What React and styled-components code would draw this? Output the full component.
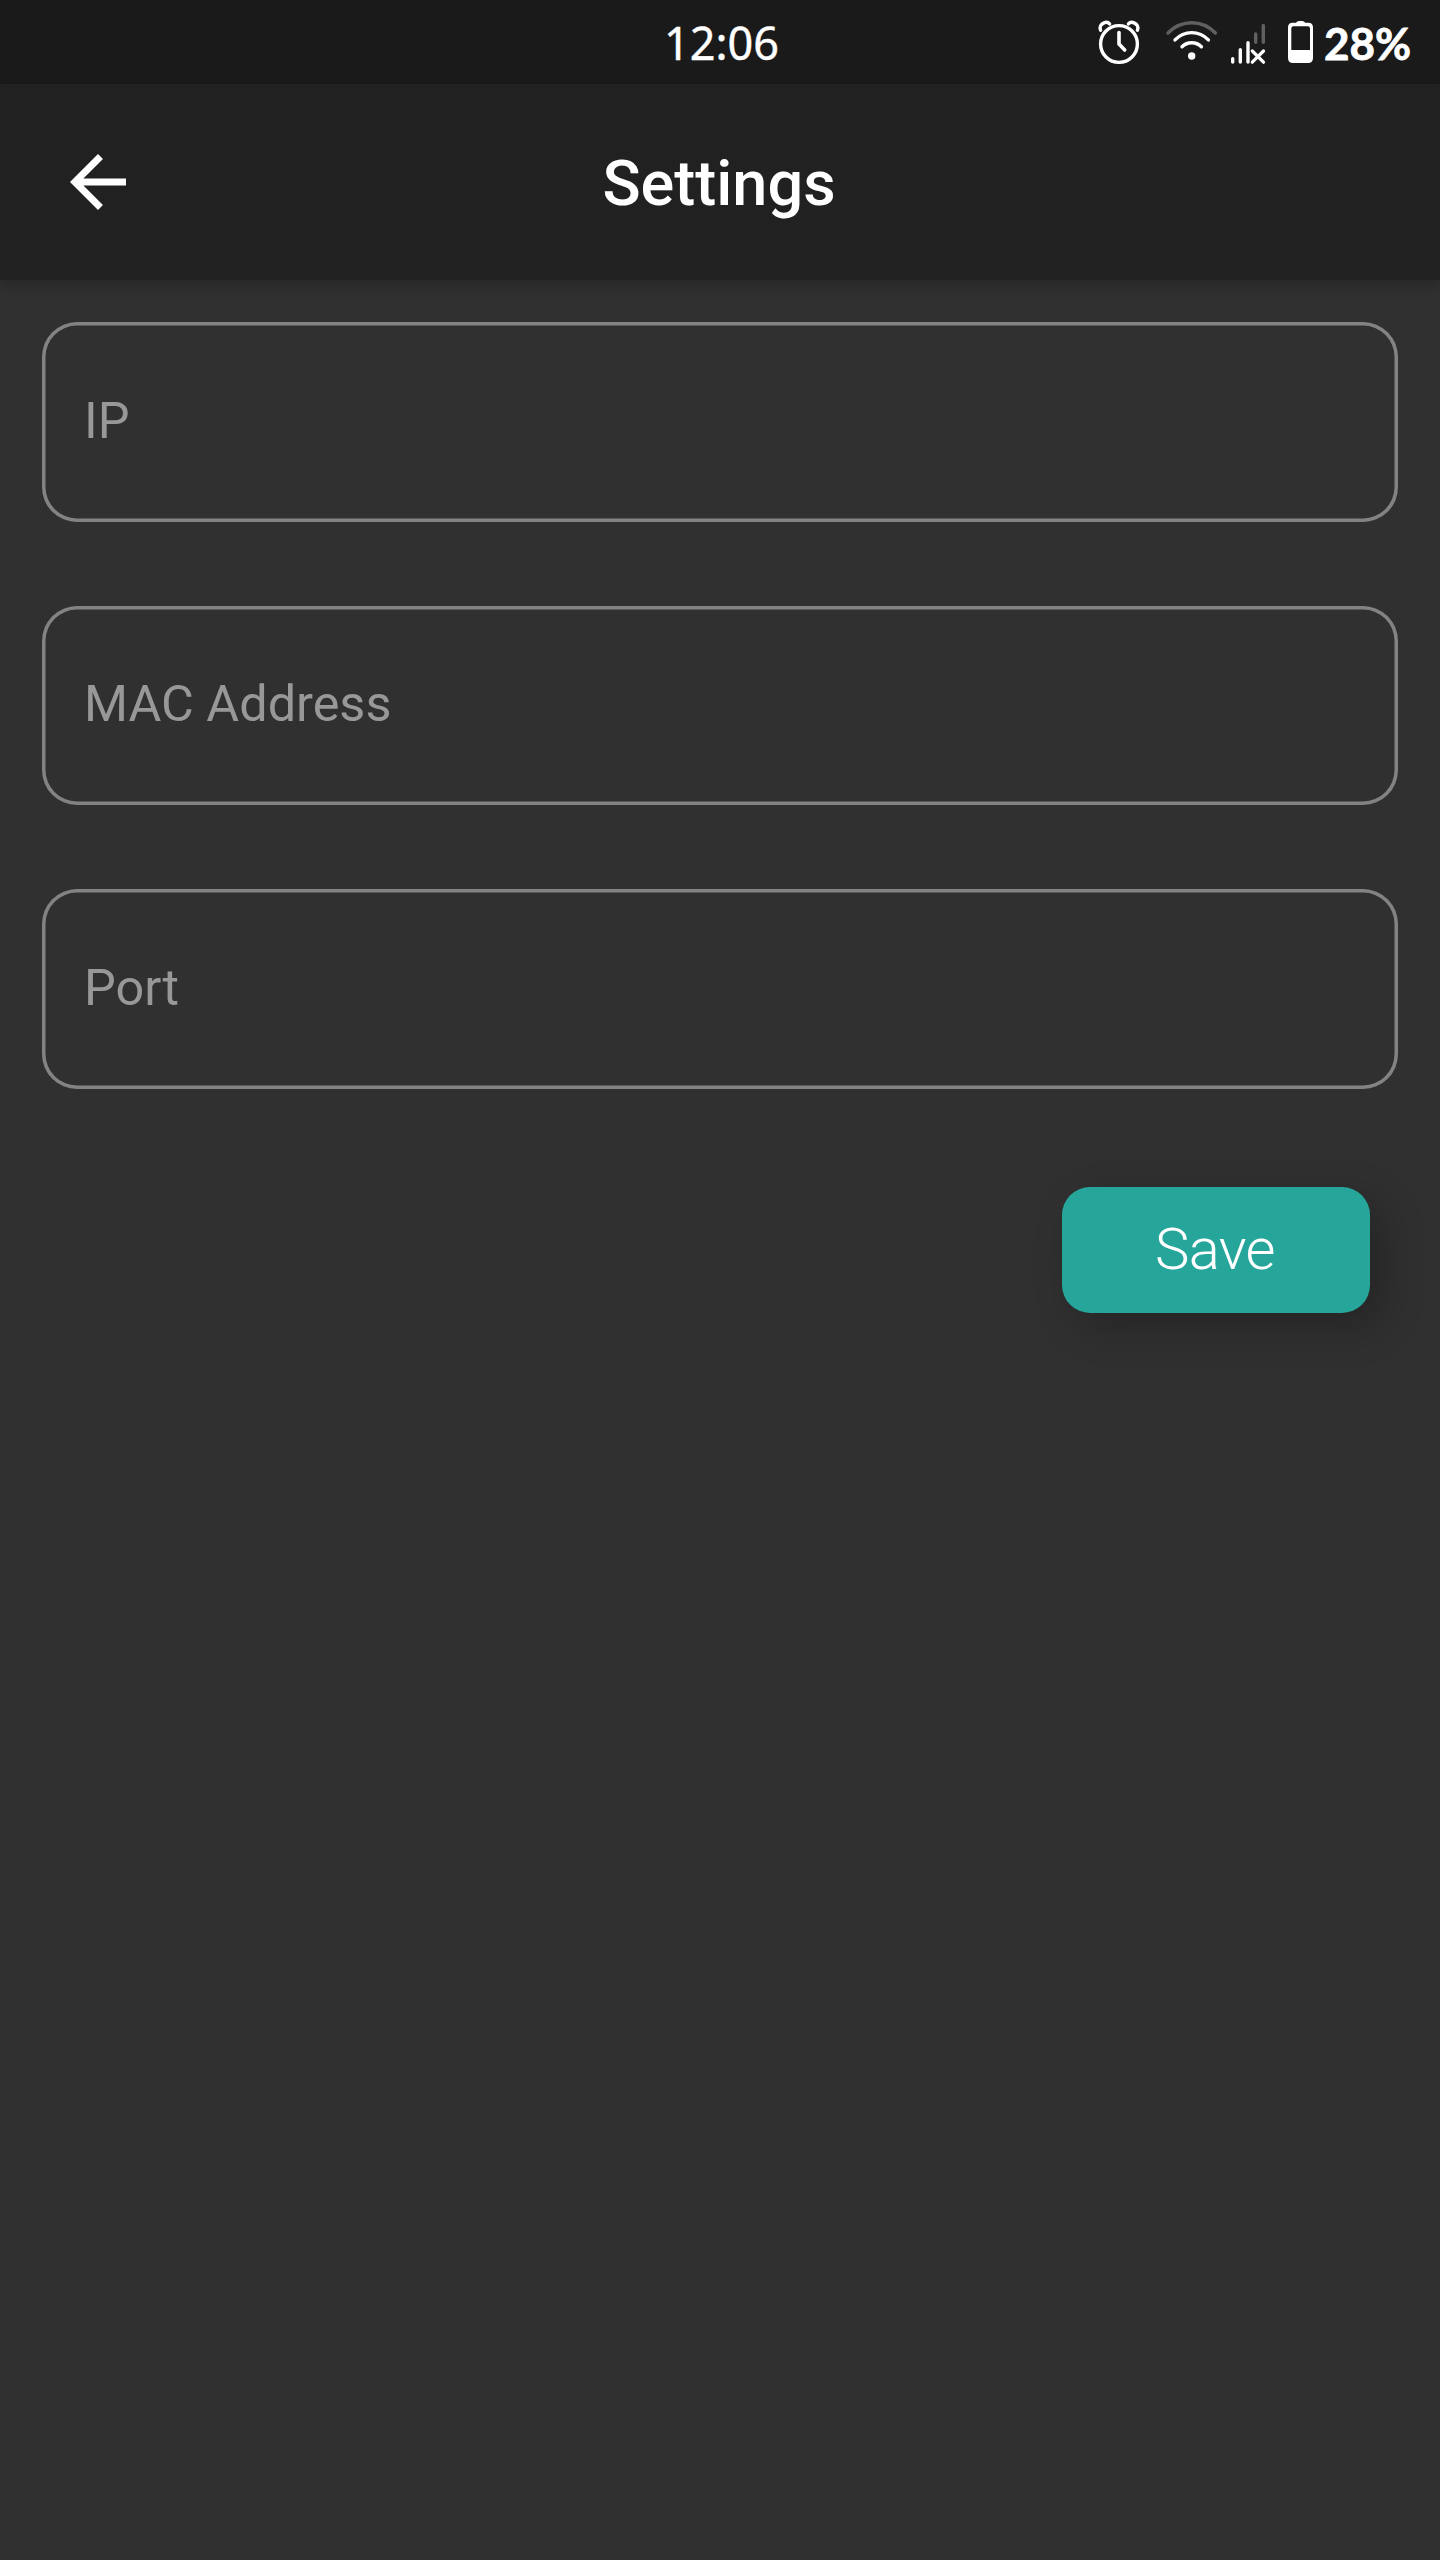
import React from "react";
import styled, { createGlobalStyle } from "styled-components";

const GlobalStyle = createGlobalStyle`
  *, *::before, *::after { box-sizing: border-box; }
  body { margin: 0; background: #303030; }
`;

const Screen = styled.div`
  display: flex;
  flex-direction: column;
  width: 1440px;
  min-height: 2560px;
  background: #303030;
  font-family: Roboto, "Noto Sans", sans-serif;
  color: #fff;
`;

const StatusBar = styled.div`
  display: grid;
  grid-template-columns: 1fr auto 1fr;
  align-items: center;
  height: 84px;
  background: #1a1a1a;
`;

const Clock = styled.time`
  grid-column: 2;
  padding: 1px 0 0 3px;
  font: 400 45px/60px "Noto Sans", sans-serif;
  -webkit-text-stroke: 0.4px #fff;
`;

const StatusIcons = styled.div`
  display: flex;
  align-items: flex-start;
  justify-content: flex-end;
  height: 84px;
  padding-right: 30px;
`;

const Glyph = styled.svg`
  flex: none;
  width: ${(p) => p.$width}px;
  height: 84px;
  margin-right: ${(p) => p.$gap}px;
  fill: none;
  stroke: #fff;
  stroke-linecap: round;
  stroke-linejoin: round;
`;

const BatteryLevel = styled.span`
  width: 86px;
  padding-top: 13px;
  font: 700 44px/60px Lato, sans-serif;
  -webkit-text-stroke: 0.8px #fff;
  white-space: nowrap;
`;

const AppBar = styled.header`
  display: grid;
  grid-template-columns: 196px 1fr 196px;
  align-items: center;
  height: 196px;
  background: #212121;
  box-shadow: 0 4px 14px rgba(0, 0, 0, 0.22);
`;

const BackButton = styled.button`
  display: flex;
  align-items: center;
  width: 196px;
  height: 196px;
  padding: 0 56px;
  border: 0;
  background: none;
  color: inherit;

  svg {
    flex: none;
    width: 84px;
    height: 84px;
    fill: currentColor;
  }
`;

const Title = styled.h1`
  margin: 0;
  padding: 4px 2px 0 0;
  text-align: center;
  font-size: 63px;
  line-height: 74px;
  font-weight: 500;
`;

const Form = styled.form`
  display: flex;
  flex-direction: column;
  gap: 84px;
  padding: 42px;
`;

const Field = styled.label`
  display: flex;
  align-items: center;
  height: 199.5px;
  padding: 0 42px 2px;
  border-radius: 35px;
  box-shadow: inset 0 0 0 3.5px #838383;
  color: #989898;
  font-size: 50.4px;
  line-height: 60px;
  white-space: nowrap;
`;

const Actions = styled.div`
  display: flex;
  justify-content: flex-end;
  padding: 14px 28px 0 0;
`;

const SaveButton = styled.button`
  width: 308px;
  height: 126px;
  padding: 0 2px 2px 0;
  border: 0;
  border-radius: 28px;
  background: #26a69a;
  box-shadow: 14px 14px 42px rgba(0, 0, 0, 0.23);
  color: #fff;
  font-family: inherit;
  font-size: 58px;
  line-height: 70px;
  font-weight: 300;
  letter-spacing: -0.7px;
`;

const AlarmIcon = () => (
  <Glyph $width={44} $gap={24} viewBox="1097 0 44 84" strokeWidth="3.4">
    <circle cx="1119" cy="44" r="18.4" />
    <path d="M1119 32.5V44l5.7 6" strokeWidth="3.6" />
    <path
      d="M1100.6 30.2c-1.6-3.4.4-6.2 3.4-7.4 2.2-.9 4.3-.4 5.6 1.1M1137.4 30.2c1.6-3.4-.4-6.2-3.4-7.4-2.2-.9-4.3-.4-5.6 1.1"
      strokeWidth="3.4"
    />
  </Glyph>
);

const WifiIcon = () => (
  <Glyph $width={53} $gap={12} viewBox="1165 0 53 84" strokeWidth="3.4">
    <path d="M1168 33Q1178 22.8 1191.7 22.8T1215.4 33" stroke="#606060" />
    <path d="M1175 39.9Q1182 32.6 1191.7 32.6T1208.4 39.9" />
    <path d="M1182 46.7Q1186 42.7 1191.7 42.7T1201.4 46.7" />
    <circle cx="1191.7" cy="56" r="3.7" fill="#fff" stroke="none" />
  </Glyph>
);

const SignalIcon = () => (
  <Glyph $width={36} $gap={21} viewBox="1230 0 36 84" strokeWidth="3.4">
    <path d="M1232.7 58.7V62M1240.3 49.7V62M1248 42.7V62" />
    <path d="M1255.7 34V42.3M1263.3 25.4V42.3" stroke="#606060" />
    <path d="M1252.3 51l11.2 11.2M1263.5 51l-11.2 11.2" strokeWidth="3.2" />
  </Glyph>
);

const BatteryIcon = () => (
  <Glyph $width={27} $gap={10} viewBox="1287 0 27 84">
    <path
      d="M1292.5 22.8h3.5q1-1.8 3-1.8h3.2q2 0 3 1.8h3.3q4.5 0 4.5 4.7v30.5q0 5-5 5h-15q-5 0-5-5V27.5q0-4.7 4.5-4.7zM1293.5 26.2q-2.2 0-2.2 2.3V50h18.7V28.5q0-2.3-2.2-2.3z"
      fill="#fff"
      fillRule="evenodd"
      stroke="none"
    />
  </Glyph>
);

const fields = ["IP", "MAC Address", "Port"];

export default function App() {
  return (
    <Screen>
      <GlobalStyle />
      <StatusBar>
        <Clock>12:06</Clock>
        <StatusIcons>
          <AlarmIcon />
          <WifiIcon />
          <SignalIcon />
          <BatteryIcon />
          <BatteryLevel>28%</BatteryLevel>
        </StatusIcons>
      </StatusBar>
      <AppBar>
        <BackButton type="button" aria-label="Back">
          <svg viewBox="0 0 24 24">
            <path d="M20 11H7.83l5.59-5.59L12 4l-8 8 8 8 1.41-1.41L7.83 13H20v-2z" />
          </svg>
        </BackButton>
        <Title>Settings</Title>
      </AppBar>
      <Form>
        {fields.map((name) => (
          <Field key={name}>{name}</Field>
        ))}
        <Actions>
          <SaveButton type="button">Save</SaveButton>
        </Actions>
      </Form>
    </Screen>
  );
}
